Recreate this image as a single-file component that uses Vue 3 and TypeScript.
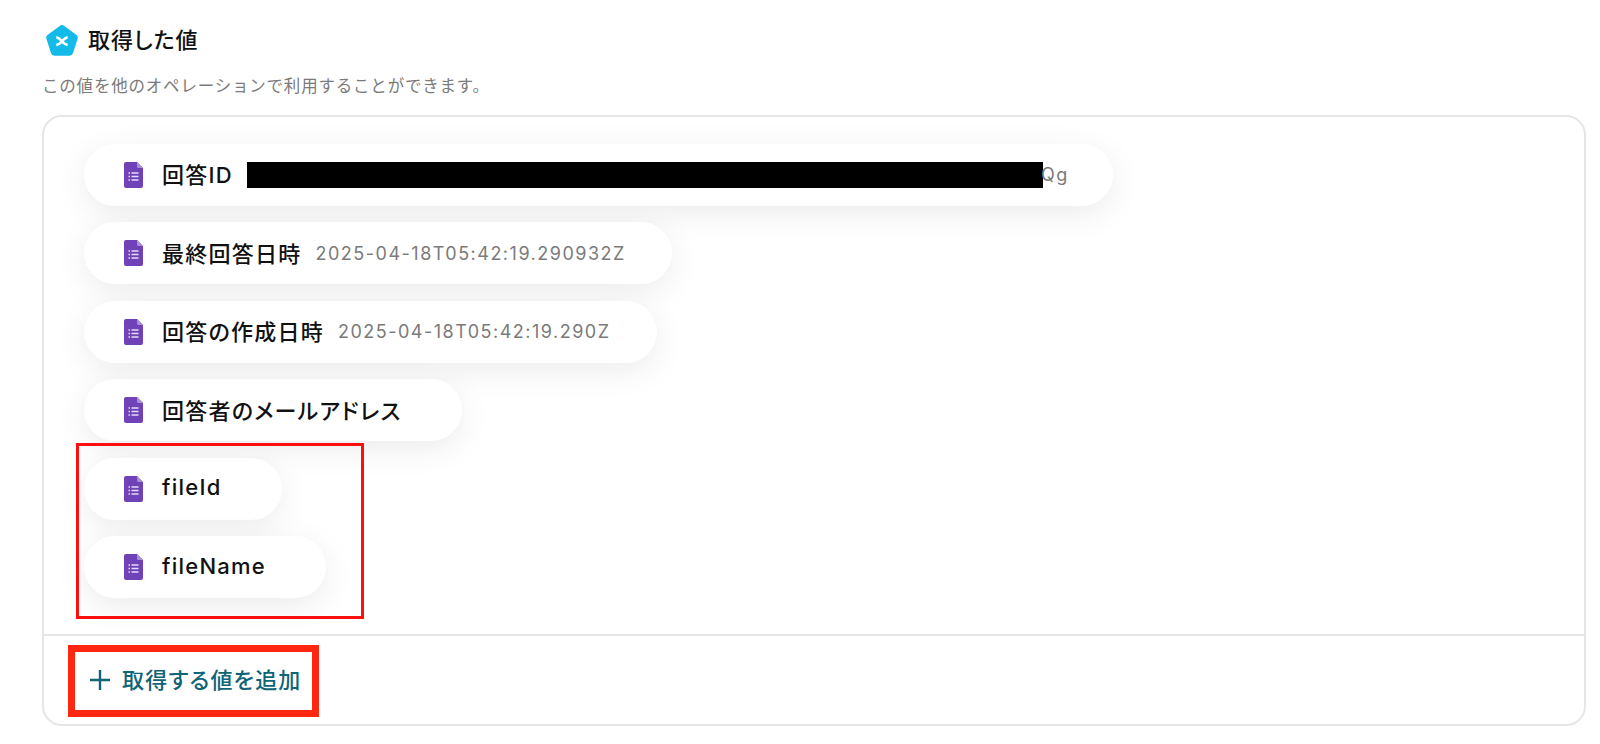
<script setup lang="ts">
interface OutputValue {
  label: string;
  value?: string;
  redacted?: boolean;
}

const values: OutputValue[] = [
  { label: "回答ID", value: "Qg", redacted: true },
  { label: "最終回答日時", value: "2025-04-18T05:42:19.290932Z" },
  { label: "回答の作成日時", value: "2025-04-18T05:42:19.290Z" },
  { label: "回答者のメールアドレス" },
  { label: "fileId" },
  { label: "fileName" },
];
</script>

<template>
  <div class="page">
    <div class="heading">
      <svg class="logo" width="32" height="31" viewBox="1.500 1.500 31 30">
        <path
          d="M14.800 2.400a3.600 3.600 0 0 1 4.400 0l11.600 8.500a3.600 3.600 0 0 1 1.300 4l-4.400 13.800a3.600 3.600 0 0 1-3.400 2.500H9.700a3.600 3.600 0 0 1-3.400-2.500L1.900 14.900a3.600 3.600 0 0 1 1.300-4z"
          fill="#15bbe8"
        />
        <path
          d="M11.500 13.500c2.500 0 3.500 1.500 5.500 3.700s3 3.600 5.500 3.600M22.500 13.500c-2.500 0-3.500 1.500-5.500 3.700s-3 3.600-5.500 3.600"
          stroke="#fff"
          stroke-width="2.600"
          fill="none"
        />
      </svg>
      <h2 class="title">取得した値</h2>
    </div>
    <p class="description">この値を他のオペレーションで利用することができます。</p>

    <div class="panel">
      <div class="list">
        <div v-for="item in values" :key="item.label" class="pill">
          <svg class="formIcon" width="19" height="26" viewBox="0 0 19 26">
            <path
              d="M2 0h11l6 6v18a2 2 0 0 1-2 2H2a2 2 0 0 1-2-2V2a2 2 0 0 1 2-2z"
              fill="#6f42b8"
            />
            <path d="M13 0l6 6h-4.500a1.500 1.500 0 0 1-1.500-1.500z" fill="#a98fd8" />
            <path
              d="M4.500 11h1.500M4.500 14.500h1.500M4.500 18h1.500M7.500 11h7M7.500 14.500h7M7.500 18h7"
              stroke="#e6dcf5"
              stroke-width="1.300"
            />
          </svg>
          <span class="label">{{ item.label }}</span>
          <span v-if="item.redacted" class="redaction"></span>
          <span v-if="item.value" class="value" :class="{ tight: item.redacted }">{{ item.value }}</span>
        </div>
      </div>
      <div class="footer">
        <button class="addButton" type="button">
          <svg width="22" height="22" viewBox="0 0 22 22">
            <path d="M11 1v20M1 11h20" stroke="#0f6478" stroke-width="2.400" fill="none" />
          </svg>
          <span class="addText">取得する値を追加</span>
        </button>
      </div>
      <div class="mark markList"></div>
      <div class="mark markButton"></div>
    </div>
  </div>
</template>

<style>
html,
body {
  background: #ffffff;
}
</style>

<style scoped>
.page {
  box-sizing: border-box;
  width: 1600px;
  height: 744px;
  padding: 25px 14px 0 42px;
  overflow: hidden;
  font-family: Inter, "Noto Sans CJK JP", sans-serif;
  font-feature-settings: "palt";
  color: #111111;
}

.heading {
  display: flex;
  align-items: center;
  gap: 10px;
  margin-left: 4px;
  height: 31px;
}

.logo {
  flex: none;
}

.title {
  margin: 0;
  font-size: 22px;
  font-weight: 500;
  line-height: 31px;
  letter-spacing: 1px;
}

.description {
  margin: 19px 0 0;
  font-size: 16.500px;
  font-feature-settings: normal;
  line-height: 22px;
  letter-spacing: 0.800px;
  color: #7b7b7b;
}

.panel {
  position: relative;
  margin-top: 18px;
  height: 611px;
  box-sizing: border-box;
  border: 2px solid #e6e6e6;
  border-radius: 20px;
  display: flex;
  flex-direction: column;
}

.list {
  flex: 1;
  display: flex;
  flex-direction: column;
  align-items: flex-start;
  gap: 16.600px;
  padding: 26.500px 0 0 40px;
}

.pill {
  display: flex;
  align-items: center;
  height: 62px;
  box-sizing: border-box;
  padding: 0 46px 0 40px;
  border-radius: 31px;
  background: #ffffff;
  box-shadow: 0 8px 32px rgba(0, 0, 0, 0.08);
}

.formIcon {
  flex: none;
  margin-right: 19px;
}

.label {
  margin-right: 14px;
  padding-bottom: 3px;
  font-size: 22px;
  font-weight: 500;
  letter-spacing: 1.250px;
  white-space: nowrap;
}

.value {
  font-size: 18px;
  letter-spacing: 1.500px;
  color: #7a7a7a;
  white-space: nowrap;
}

.value.tight {
  margin: 0 -2px;
}

.redaction {
  width: 796px;
  height: 26px;
  background: #000000;
}

.footer {
  flex: none;
  height: 90px;
  border-top: 2px solid #e6e6e6;
  display: flex;
  align-items: center;
  box-sizing: border-box;
  padding-left: 45px;
}

.addButton {
  display: flex;
  align-items: center;
  gap: 11px;
  padding: 0;
  border: none;
  background: none;
  font-family: inherit;
  font-feature-settings: inherit;
  font-size: 22px;
  font-weight: 500;
  letter-spacing: 1.200px;
  color: #0f6478;
}

.addText {
  padding-bottom: 5px;
}

.mark {
  position: absolute;
  box-sizing: border-box;
  pointer-events: none;
}

.markList {
  left: 32px;
  top: 326px;
  width: 288px;
  height: 176px;
  border: 3px solid #fb1010;
}

.markButton {
  left: 24px;
  top: 528px;
  width: 251px;
  height: 72px;
  border: 7px solid #ff2712;
}
</style>
